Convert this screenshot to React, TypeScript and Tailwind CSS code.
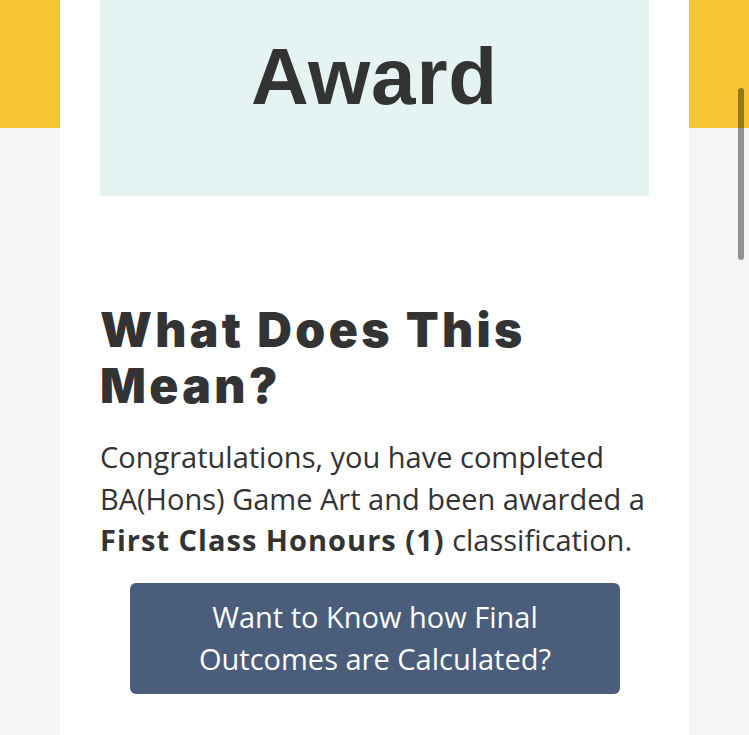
import React from 'react';

// Result page: award banner, explanation and link to the calculation rules
const App: React.FC = () => {
  return (
    <div className="relative min-h-screen overflow-hidden bg-[linear-gradient(to_bottom,#f5c532_128px,#f4f6f5_128px)] text-[#333333]">
      <main className="mx-[60px] min-h-screen bg-white px-10 pb-10">
        {/* Award banner */}
        <div className="flex h-[196px] justify-center bg-[#e6f3f3] pt-[37px]">
          <h1 className="font-['Liberation_Sans',Arial,sans-serif] text-[80px] font-bold leading-none tracking-[0.01em]">Award</h1>
        </div>

        {/* Explanation */}
        <h2 className="mt-[106px] font-['Inter',sans-serif] text-[48px] font-black leading-[56px] tracking-[0.07em]">
          What Does This Mean?
        </h2>
        <p className="mt-[22px] font-['Open_Sans',sans-serif] text-[29px] leading-[41.5px]">
          Congratulations, you have completed BA(Hons) Game Art and been awarded a{' '}
          <strong className="font-bold tracking-[0.035em]">First Class Honours (1)</strong> classification.
        </p>

        <button className="mx-[30px] mt-[22px] block w-[490px] rounded-md bg-[#4a5d7b] pt-[13px] pb-[14px] text-center font-['Open_Sans',sans-serif] text-[29px] leading-[42px] text-white">
          Want to Know how Final
          <br />
          Outcomes are Calculated?
        </button>
      </main>

      {/* Overlay scrollbar thumb */}
      <div className="absolute right-[5px] top-[88px] h-[172px] w-[6px] rounded-full bg-black/40" />
    </div>
  );
};

export default App;
